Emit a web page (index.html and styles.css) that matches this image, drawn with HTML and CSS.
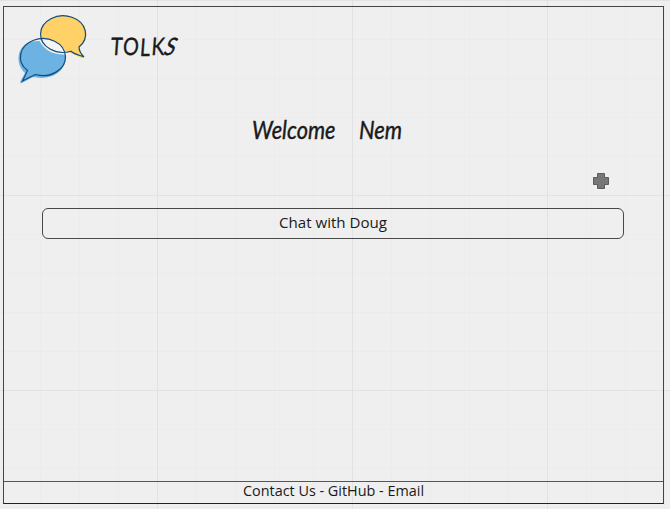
FILE: index.html
```html
<!DOCTYPE html>
<html lang="en">
<head>
<meta charset="utf-8">
<title>Tolks</title>
<link rel="stylesheet" href="styles.css">
</head>
<body>
<div class="app">
  <header class="header">
    <svg class="logo" viewBox="0 0 74 74" aria-hidden="true">
      <path class="yellow" d="M25.500 27.500A22.500 18.300 0 1 1 61.500 35.500L67 45L65.500 46.500L53 40.500L48 39.500C45 31 36 27 25.500 27.500Z"/>
      <path class="gap" d="M25.500 27.500C36 27 45 31 48 39.500C37 41 28 36 25.500 27.500Z"/>
      <path class="blue" d="M22.500 29C27 37.500 35 43 48.500 42.500C50 57 39 66 24 66C20 66 18 65 15 65.500L4 71.500L3 70L8 61C-3 51 .5 33 14 29.500Z"/>
      <path class="outline" d="M54 39.200A22.500 18.300 0 1 1 62 35C62 39 64 42 67 45C62 43 57 42 54 39.200Z"/>
      <path class="outline" d="M18.500 62.500A22.500 18.500 0 1 0 10.500 58.500L5.500 69C9 67 14 64.500 18.500 62.500Z"/>
    </svg>
    <h1 class="brand"><span class="script brand-text">TO<span class="low">L</span>K<span class="tilt">S</span></span></h1>
  </header>
  <main class="main">
    <h2 class="welcome">
      <span class="word greeting"><span class="script">Welcome</span></span>
      <span class="word name"><span class="script">Nem</span></span>
    </h2>
    <div class="tools">
      <button class="add" type="button" aria-label="Add">
        <svg viewBox="0 0 16 16"><path d="M4.500 .5h7v4h4v7h-4v4h-7v-4h-4v-7h4Z"/></svg>
      </button>
    </div>
    <button class="chat" type="button">Chat with Doug</button>
  </main>
  <footer class="footer">Contact Us - GitHub - Email</footer>
</div>
</body>
</html>
```
FILE: styles.css
```css
* { box-sizing: border-box; }

body {
  margin: 0;
  height: 509px;
  padding: 6px 6px 5px 3px;
  overflow: hidden;
  color: #1a1a1a;
  font-family: "Open Sans", "Noto Sans", sans-serif;
  background-color: #efefef;
  background-image:
    linear-gradient(90deg, #e2e2e2 1px, transparent 1px),
    linear-gradient(#e2e2e2 1px, transparent 1px),
    linear-gradient(90deg, #ececec 1px, transparent 1px),
    linear-gradient(#ececec 1px, transparent 1px);
  background-size: 195px 195px, 195px 195px, 39px 39px, 39px 39px;
  background-position: 157px 0, 0 0, 1px 0, 0 0;
}

.app {
  display: flex;
  flex-direction: column;
  height: 498px;
  border: 1px solid #444;
  border-bottom-color: #222;
}

.header {
  display: flex;
  align-items: flex-start;
  height: 88px;
  padding: 5px 0 0 13px;
}

.logo { width: 74px; height: 74px; }
.yellow { fill: #ffd166; }
.gap { fill: #f5f5f5; }
.blue { fill: #6cb2e3; }
.outline { fill: none; stroke: #124c7c; stroke-width: 1.200; }

.script {
  display: inline-block;
  font-family: Lato, sans-serif;
  font-style: italic;
  font-weight: 400;
  line-height: 30px;
  white-space: nowrap;
  transform-origin: 0 50%;
  -webkit-text-stroke: .4px #1a1a1a;
}

.brand { margin: 19px 0 0 20px; font-size: 24px; line-height: 30px; }
.brand-text { font-style: normal; letter-spacing: 1.500px; transform: scaleX(.82) skewX(-5deg); }
.low { display: inline-block; transform: translateY(1px); }
.tilt { display: inline-block; transform: skewX(-22deg); }

.main { flex: 1; padding: 0 39px 0 38px; }

.welcome {
  display: flex;
  height: 30px;
  margin: 17px 0 3px 210px;
  font-size: 25px;
}
.word { width: 107px; }
.greeting .script { transform: scaleX(.87); }
.name .script { transform: scaleX(.88); }

.tools {
  display: flex;
  justify-content: flex-end;
  height: 63px;
  padding: 28px 15px 0 0;
}
.add { width: 16px; height: 16px; padding: 0; border: 0; background: none; }
.add svg { display: block; width: 16px; height: 16px; }
.add path { fill: #777; stroke: #5c5c5c; }

.chat {
  display: block;
  width: 582px;
  height: 31px;
  padding: 0 0 3px;
  border: 1px solid #484848;
  border-radius: 6px;
  background: none;
  color: inherit;
  font: 15.100px/24px "Open Sans", "Noto Sans", sans-serif;
}

.footer {
  height: 22px;
  border-top: 1px solid #555;
  font-size: 14.400px;
  line-height: 18px;
  text-align: center;
}
```
